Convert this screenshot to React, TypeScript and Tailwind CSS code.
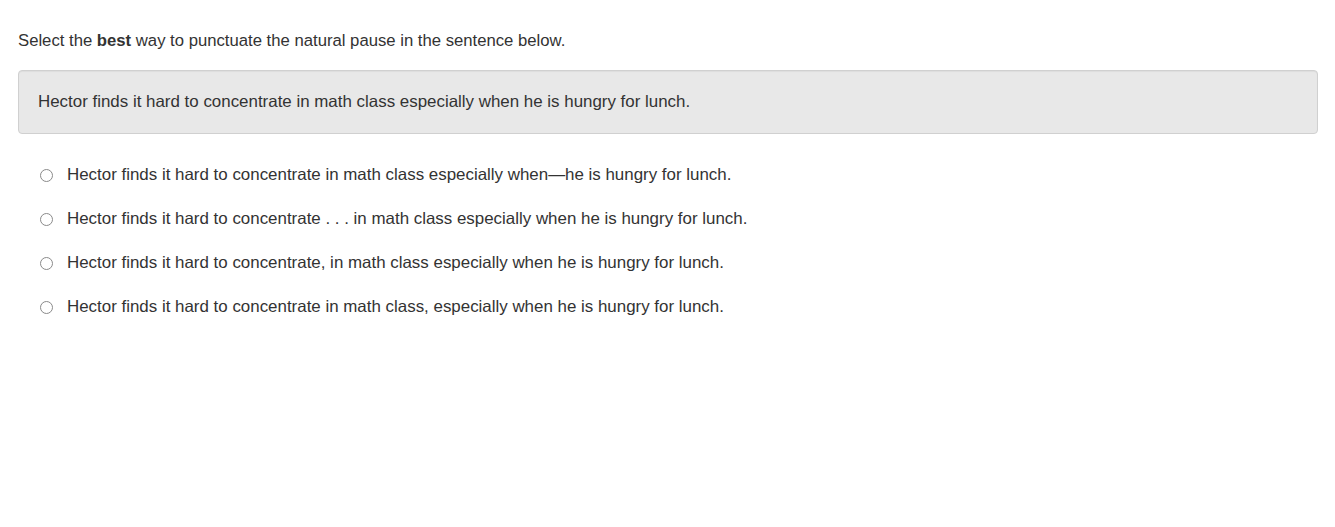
import React from "react";

const options = [
  "Hector finds it hard to concentrate in math class especially when\u2014he is hungry for lunch.",
  "Hector finds it hard to concentrate . . . in math class especially when he is hungry for lunch.",
  "Hector finds it hard to concentrate, in math class especially when he is hungry for lunch.",
  "Hector finds it hard to concentrate in math class, especially when he is hungry for lunch.",
];

export default function App() {
  return (
    <div className="min-h-screen bg-white text-[#333333] text-[16.92px] leading-[22px] [font-family:'Liberation_Sans',Arial,sans-serif] pl-[18px] pr-[17px] pt-[30px]">
      <p className="text-[16.7px]">
        Select the <b>best</b> way to punctuate the natural pause in the sentence below.
      </p>
      <div className="mt-[18px] h-[64px] flex items-center pl-[19px] pr-[20px] bg-[#e8e8e8] border border-[#d0d0d0] rounded-[4px] shadow-[inset_0_1px_1px_rgba(0,0,0,0.05)]">
        Hector finds it hard to concentrate in math class especially when he is hungry for lunch.
      </div>
      <div className="mt-[30px] flex flex-col gap-[22px] pl-[22px]">
        {options.map((o) => (
          <label key={o} className="flex items-center h-[22px]">
            <span className="w-[13px] h-[13px] rounded-full border border-[#8a8a8a] bg-white shrink-0" />
            <span className="ml-[14px]">{o}</span>
          </label>
        ))}
      </div>
    </div>
  );
}
